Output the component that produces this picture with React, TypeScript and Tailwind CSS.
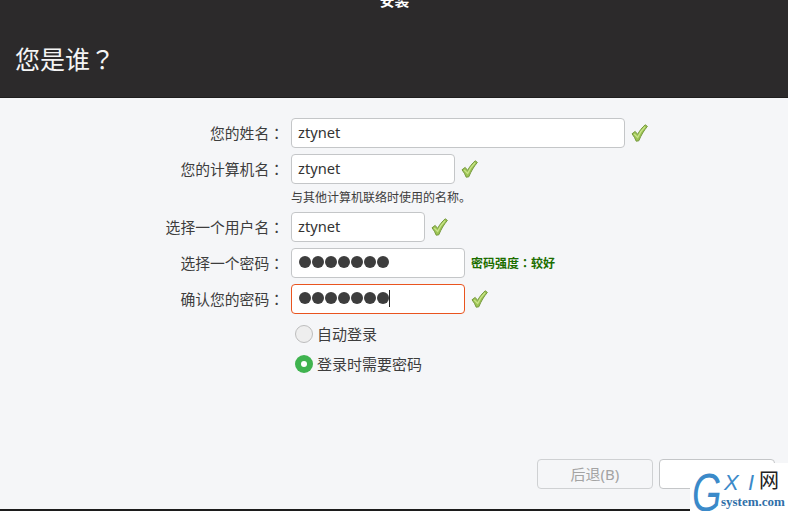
const cjk = `font-['Noto_Sans','Noto_Sans_CJK_SC',sans-serif]`;

function Check() {
  return (
    <svg width="17" height="18" viewBox="0 0 17 18" className="shrink-0">
      <path
        d="M1 9.8 L4.2 7.4 L6.6 10.4 C8.6 6.8 11 3.6 14.2 0.8 L16.4 2.4 C12.8 6.6 10.2 11 7.8 16.8 L5.2 17.2 C4.2 14.4 2.8 12 1 9.8 Z"
        fill="#9cc453"
        stroke="#76993f"
        strokeWidth="1"
        strokeLinejoin="round"
      />
      <path d="M3.2 10 L6.6 13.4 C8.4 9.4 10.8 5.8 14 2.8" fill="none" stroke="#c9e48a" strokeWidth="1.3" />
    </svg>
  );
}

function Colon({ text }: { text: string }) {
  return <span className="font-['Noto_Sans_CJK_TC',sans-serif]">{text}</span>;
}

function Dots({ caret }: { caret?: boolean }) {
  return (
    <div className="flex items-center ml-[1px]">
      {[0, 1, 2, 3, 4, 5, 6].map((i) => (
        <span key={i} className="w-[12px] h-[12px] mr-[1px] rounded-full bg-[#3d3d3d]" />
      ))}
      {caret && <span className="w-px h-[17px] -ml-px bg-[#222]" />}
    </div>
  );
}

function Row({
  label,
  width,
  error,
  children,
  after,
}: {
  label: string;
  width: number;
  error?: boolean;
  children: React.ReactNode;
  after?: React.ReactNode;
}) {
  return (
    <div className="flex items-center h-[30px]">
      <div className="w-[284px] text-right text-[14.8px] leading-[30px] text-[#3d3d3d] whitespace-nowrap">
        {label}
        <Colon text="：" />
      </div>
      <div
        className={`ml-[7px] h-[30px] bg-white rounded-[4px] border flex items-center px-[6px] pb-[2px] text-[14.67px] text-[#333] ${
          error ? "border-[#e9541f]" : "border-[#c4c6c8]"
        }`}
        style={{ width }}
      >
        {children}
      </div>
      {after}
    </div>
  );
}

function Radio({ label, on }: { label: string; on?: boolean }) {
  return (
    <div className="flex items-center h-[18px] ml-[295px]">
      {on ? (
        <span className="w-[18px] h-[18px] rounded-full bg-[#3fb34f] flex items-center justify-center">
          <span className="w-[6px] h-[6px] rounded-full bg-white" />
        </span>
      ) : (
        <span className="w-[18px] h-[18px] rounded-full bg-[#eeeeee] border border-[#bdbdbd]" />
      )}
      <span className="ml-[4px] text-[15px] leading-[18px] text-[#3d3d3d]">{label}</span>
    </div>
  );
}

export default function App() {
  return (
    <div className={`relative w-[788px] h-[511px] overflow-hidden bg-[#f5f6f8] flex flex-col ${cjk}`}>
      <header className="h-[98px] shrink-0 bg-[#2c2a2b] border-b border-[#1f1e1e] flex flex-col">
        <div className="h-[10px] overflow-hidden flex justify-center pl-[1px]">
          <span className="-mt-[10px] text-[14.67px] leading-[20px] font-bold text-white">安装</span>
        </div>
        <h1 className="mt-[31px] ml-[15px] text-[25px] leading-[34px] text-[#f5f5f5] font-normal">
          您是谁
          <Colon text="？" />
        </h1>
      </header>

      <main className="flex-1 flex flex-col pt-[20px]">
        <Row label="您的姓名" width={334} after={<div className="ml-[6px]"><Check /></div>}>
          ztynet
        </Row>
        <div className="mt-[6px]">
          <Row label="您的计算机名" width={164} after={<div className="ml-[6px]"><Check /></div>}>
            ztynet
          </Row>
        </div>
        <div className="ml-[291px] h-[28px] flex items-center text-[12px] text-[#3d3d3d]">与其他计算机联络时使用的名称。</div>
        <Row label="选择一个用户名" width={134} after={<div className="ml-[6px]"><Check /></div>}>
          ztynet
        </Row>
        <div className="mt-[6px]">
          <Row
            label="选择一个密码"
            width={174}
            after={
              <span className="ml-[6px] text-[12px] font-bold text-[#1c6e00]">
                密码强度
                <Colon text="：" />
                较好
              </span>
            }
          >
            <Dots />
          </Row>
        </div>
        <div className="mt-[6px]">
          <Row label="确认您的密码" width={174} error after={<div className="ml-[6px]"><Check /></div>}>
            <Dots caret />
          </Row>
        </div>
        <div className="mt-[11px] flex flex-col gap-[12px]">
          <Radio label="自动登录" />
          <Radio label="登录时需要密码" on />
        </div>

        <div className="mt-auto mb-[20px] mr-[13px] flex justify-end gap-[6px]">
          <div className="w-[116px] h-[30px] rounded-[4px] border border-[#cfd1d3] flex items-center justify-center text-[15px] text-[#a3a3a3]">
            后退(B)
          </div>
          <div className="w-[116px] h-[30px] rounded-[4px] border border-[#c4c6c8] bg-white" />
        </div>
      </main>

      <div className="h-[2px] shrink-0 bg-[#1c1c1c]" />

      <div className="absolute right-0 bottom-0 w-[98px] h-[48px] bg-white overflow-hidden font-['Liberation_Sans',sans-serif]">
        <span className="absolute left-[2px] top-[5px] text-[54px] leading-[48px] italic text-[#3b8ac9] origin-left scale-x-[0.7]">G</span>
        <span className="absolute left-[34px] top-[8px] text-[22px] leading-[24px] italic text-[#3b8ac9]">X</span>
        <span className="absolute left-[58px] top-[8px] text-[22px] leading-[24px] italic text-[#3b8ac9]">I</span>
        <span className="absolute left-[69px] top-[4px] text-[20px] leading-[26px] text-[#222] font-['Noto_Sans_CJK_SC',sans-serif]">网</span>
        <span className="absolute left-[31px] top-[31px] text-[13px] leading-[16px] font-bold text-[#2f6fa8] font-['Liberation_Serif',serif]">system.com</span>
      </div>
    </div>
  );
}
